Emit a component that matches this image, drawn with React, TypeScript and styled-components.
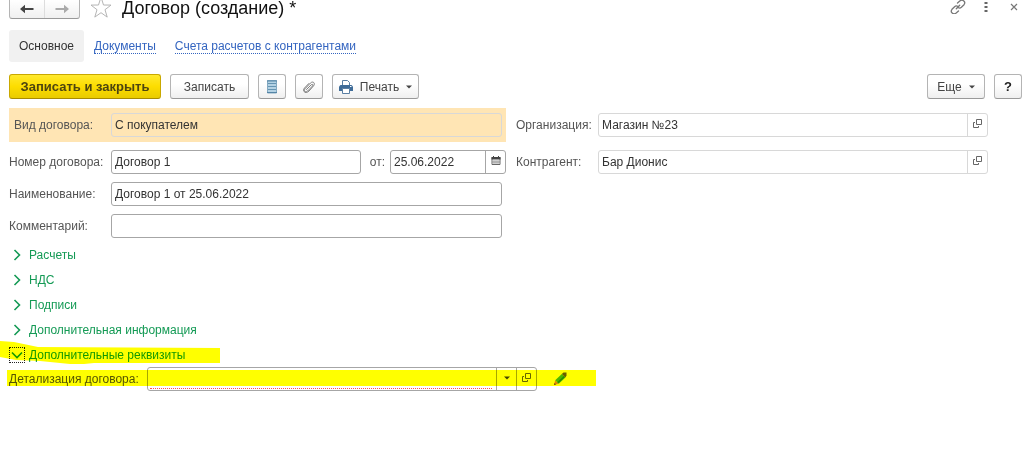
import React from "react";
import styled, { createGlobalStyle, css } from "styled-components";

const GlobalStyle = createGlobalStyle`
  * { box-sizing: border-box; }
  body {
    margin: 0;
    background: #fff;
    color: #333;
    font: 12px/16px "Liberation Sans", Arial, sans-serif;
    overflow-x: hidden;
  }
  button, input { font: inherit; color: inherit; margin: 0; }
`;

const Page = styled.main`
  padding: 0 2px 24px 9px;
`;

const TitleBar = styled.header`
  display: flex;
  align-items: flex-start;
  height: 30px;
`;

const History = styled.div`
  display: flex;
  width: 71px;
  height: 19px;
  border: 1px solid #b4b4b4;
  border-top: 0;
  border-bottom-color: #999;
  border-radius: 0 0 3px 3px;
  background: linear-gradient(#fff, #f0f0f0);
`;

const HistoryButton = styled.button`
  flex: 1;
  padding: 0;
  border: 0;
  background: none;
  line-height: 0;
  & + & { border-left: 1px solid #ddd; }
`;

const Star = styled.button`
  width: 24px;
  height: 19px;
  margin: 0 9px;
  padding: 0;
  border: 0;
  background: none;
  line-height: 0;
`;

const Title = styled.h1`
  margin: 0;
  flex: 1;
  font-size: 18px;
  line-height: 17px;
  font-weight: 400;
  color: #111;
`;

const WindowTools = styled.div`
  display: flex;
  gap: 12px;
`;

const WindowButton = styled.button`
  width: 16px;
  height: 14px;
  padding: 0;
  border: 0;
  background: none;
  line-height: 0;
`;

const Tabs = styled.nav`
  display: flex;
  align-items: center;
  gap: 19px;
  height: 32px;
  margin-bottom: 12px;
`;

const CurrentTab = styled.span`
  margin-right: -9px;
  padding: 8px 10px;
  border-radius: 3px;
  background: #f1f1f1;
`;

const TabLink = styled.a`
  padding-top: 1px;
  color: #3465c0;
  line-height: 13px;
  text-decoration: none;
  border-bottom: 1px dotted #3465c0;
`;

const Toolbar = styled.div`
  display: flex;
  gap: 9px;
  margin-bottom: 9px;
`;

const Spacer = styled.div`
  flex: 1;
`;

const Button = styled.button<{ $primary?: boolean; $width: number }>`
  display: flex;
  align-items: center;
  justify-content: center;
  gap: 7px;
  width: ${(p) => p.$width}px;
  height: 25px;
  padding: 0;
  border: 1px solid #b4b4b4;
  border-bottom-color: #999;
  border-radius: 3px;
  background: linear-gradient(#fff 40%, #efefef);
  color: #444;
  white-space: nowrap;
  ${(p) =>
    p.$primary &&
    css`
      border-color: #c9a800;
      border-bottom-color: #a88c00;
      background: linear-gradient(#ffe92e, #fddd00 50%, #e9cb00);
      color: #4d4510;
      font-size: 13px;
      font-weight: 700;
    `}
`;

const HelpMark = styled.b`
  font-size: 13px;
  color: #222;
`;

const Form = styled.form`
  display: grid;
  grid-template-columns: 497fr 472fr;
  column-gap: 10px;
  margin-right: 34px;
`;

const Column = styled.div`
  display: flex;
  flex-direction: column;
  gap: 8px;
  min-width: 0;
`;

const Row = styled.div<{ $inset?: boolean; $tall?: boolean; $band?: boolean }>`
  display: flex;
  align-items: center;
  height: ${(p) => (p.$tall ? 34 : 24)}px;
  padding-right: ${(p) => (p.$inset ? 4 : 0)}px;
  ${(p) =>
    p.$band &&
    css`
      padding: 0 4px 0 5px;
      background: #ffe5b4;
    `}
`;

const Label = styled.label<{ $width: number }>`
  flex: 0 0 ${(p) => p.$width}px;
  color: #555;
  white-space: nowrap;
`;

const Field = styled.div<{ $soft?: boolean; $clear?: boolean; $basis?: number }>`
  display: flex;
  flex: ${(p) => (p.$basis ? `0 1 ${p.$basis}px` : "1")};
  min-width: 0;
  height: 24px;
  border: 1px solid ${(p) => (p.$soft ? "#d8d8d8" : "#a6a6a6")};
  border-radius: 3px;
  background: ${(p) => (p.$clear ? "transparent" : "#fff")};
`;

const Input = styled.input<{ $required?: boolean }>`
  flex: 1;
  width: 0;
  min-width: 0;
  padding: 0 3px;
  border: 0;
  outline: 0;
  background: none;
  ${(p) =>
    p.$required &&
    css`
      height: 21px;
      margin: 0 4px 0 2px;
      border-bottom: 1px dotted #ff5050;
    `}
`;

const FieldButton = styled.button<{ $soft?: boolean }>`
  width: 20px;
  padding: 0 0 2px;
  border: 0;
  border-left: 1px solid ${(p) => (p.$soft ? "#d8d8d8" : "#a6a6a6")};
  background: none;
  line-height: 0;
`;

const Between = styled.label`
  margin: 0 5px 0 9px;
  color: #555;
`;

const Groups = styled.section`
  display: flex;
  flex-direction: column;
  align-items: flex-start;
  margin-top: 4px;
`;

const GroupButton = styled.button`
  display: flex;
  align-items: center;
  gap: 4px;
  height: 25px;
  padding: 0;
  border: 0;
  background: none;
  color: #149a55;
  white-space: nowrap;
`;

const Chevron = styled.span<{ $focused?: boolean }>`
  display: flex;
  align-items: center;
  justify-content: center;
  width: 16px;
  height: 16px;
  border: 1px dotted ${(p) => (p.$focused ? "#222" : "transparent")};
`;

const Marked = styled.div`
  position: relative;
`;

const Marker = styled.svg`
  position: absolute;
  left: -9px;
  top: -14px;
  mix-blend-mode: multiply;
  pointer-events: none;
`;

const DetailRow = styled.div`
  display: flex;
  align-items: center;
`;

const EditButton = styled.button`
  width: 16px;
  height: 16px;
  margin-left: 15px;
  padding: 0;
  border: 0;
  background: none;
  line-height: 0;
`;

const Arrow = ({ back }: { back?: boolean }) => (
  <svg width="14" height="10" viewBox="0 0 14 10" fill={back ? "#444" : "#aaa"}>
    {back ? <path d="M0 5l5-4.200V4h8.500v2H5v3.200z" /> : <path d="M14 5L9 .8V4H.5v2H9v3.200z" />}
  </svg>
);

const Caret = () => (
  <svg width="6" height="4" viewBox="0 0 6 4">
    <path d="M0 .5h6L3 3.500z" fill="#444" />
  </svg>
);

const OpenIcon = () => (
  <svg width="10" height="10" viewBox="0 0 10 10" fill="none" stroke="#666">
    <path d="M3.500 .5h5v5h-5zM2 3.500H.5v5h5V7" />
  </svg>
);

const CalendarIcon = () => (
  <svg width="10" height="10" viewBox="0 0 10 10">
    <path d="M1 1.500h8v7H1z" fill="#fff" stroke="#666" />
    <path d="M.5 1h9v2.500h-9zM2 0h1v2H2zM7 0h1v2H7z" fill="#444" />
    <path d="M3 4v4M5 4v4M7 4v4M1 6h8" stroke="#888" strokeWidth=".8" />
  </svg>
);

const ListIcon = () => (
  <svg width="10" height="14" viewBox="0 0 10 14">
    <path d="M.5 .5h9v12.500h-9z" fill="#b4d2e4" stroke="#83a9c1" />
    <path d="M1 3.500h8M1 6.500h8M1 9.500h8" stroke="#6695b3" />
    <path d="M0 1h10M0 12.500h10" stroke="#5585a6" />
  </svg>
);

const ClipIcon = () => (
  <svg width="14" height="14" viewBox="0 0 14 14" fill="none" stroke="#808080" strokeLinecap="round">
    <path d="M4.500 9.500l4.700-4.700c1.200-1.200 2.400 0 1.300 1.200L5.600 11c-2 2-4.400 0-2.500-2.300l5.300-5.600c2.500-2.500 5.300 0 3.200 2.700L7 11c-3.200 3.400-7.200.3-4.500-3L6.800 3.500" />
  </svg>
);

const PrintIcon = () => (
  <svg width="14" height="14" viewBox="0 0 14 14">
    <path d="M3.500 6V.5h5l2 2V6" fill="#fff" stroke="#5a7fa3" />
    <path d="M1.500 5h11L14 6.500V11H0V6.500z" fill="#3f6c98" />
    <path d="M3.500 8.500h7v5h-7z" fill="#fff" stroke="#5a7fa3" />
    <path d="M11 6.500h1.500" stroke="#fff" />
  </svg>
);

const LinkIcon = () => (
  <svg width="16" height="14" viewBox="0 0 16 14" fill="none" stroke="#777" strokeWidth="1.300" strokeLinecap="round">
    <path d="M7.500 3l2.300-2c2.900-2.200 6.400.9 4.200 3.700l-2.600 2.600c-1 .9-2.200 1-3.300.2M8.500 11l-2.300 2c-2.900 2.200-6.400-.9-4.200-3.700l2.600-2.600c1-.9 2.200-1 3.300-.2M6.300 8.700l3.400-3.400" />
  </svg>
);

const PencilIcon = () => (
  <svg width="16" height="16" viewBox="0 0 16 16">
    <path d="M2 14l1.200-4.800 3.600 3.600z" fill="#e58a38" />
    <path d="M3.200 9.200l6.600-6.300 3.600 3.600-6.600 6.300z" fill="#4bb848" />
    <path d="M5.800 11.800l6.600-6.300" stroke="#2c8a35" strokeWidth="1.500" />
    <path d="M9.800 2.900L11.500 1.500h3v3l-1.100 2z" fill="#6a6050" />
    <path d="M2 14l.6-2 1.400 1.400z" fill="#554030" />
  </svg>
);

const ChevronIcon = ({ open }: { open?: boolean }) => (
  <svg width="12" height="12" viewBox="0 0 12 12" fill="none" stroke="#149a55" strokeWidth="1.600">
    {open ? <path d="M1 3.500l5 5 5-5" /> : <path d="M3.500 1l5 5-5 5" />}
  </svg>
);

const groups = ["Расчеты", "НДС", "Подписи", "Дополнительная информация"];

export default function App() {
  return (
    <Page>
      <GlobalStyle />
      <TitleBar>
        <History>
          <HistoryButton aria-label="Назад"><Arrow back /></HistoryButton>
          <HistoryButton aria-label="Вперед"><Arrow /></HistoryButton>
        </History>
        <Star aria-label="В избранное">
          <svg width="24" height="19" viewBox="0 0 24 19" fill="#fff" stroke="#b5b5b5">
            <path d="M12-3l2.500 8 7.500.1-6 4.600 2.200 7.400L12 12.700l-6.200 4.400L8 9.700 2 5.100 9.500 5z" />
          </svg>
        </Star>
        <Title>Договор (создание) *</Title>
        <WindowTools>
          <WindowButton aria-label="Ссылка"><LinkIcon /></WindowButton>
          <WindowButton aria-label="Меню">
            <svg width="4" height="12" viewBox="0 0 4 12" fill="#666">
              <path d="M.5 1h3v2h-3zM.5 5h3v2h-3zM.5 9h3v2h-3z" />
            </svg>
          </WindowButton>
          <WindowButton aria-label="Закрыть">
            <svg width="8" height="8" viewBox="0 0 8 8" stroke="#777" strokeWidth="1.200">
              <path d="M1 1l6 6M7 1L1 7" />
            </svg>
          </WindowButton>
        </WindowTools>
      </TitleBar>

      <Tabs>
        <CurrentTab>Основное</CurrentTab>
        <TabLink href="#documents">Документы</TabLink>
        <TabLink href="#accounts">Счета расчетов с контрагентами</TabLink>
      </Tabs>

      <Toolbar>
        <Button $primary $width={152}>Записать и закрыть</Button>
        <Button $width={79}>Записать</Button>
        <Button $width={28} aria-label="Список"><ListIcon /></Button>
        <Button $width={28} aria-label="Файлы"><ClipIcon /></Button>
        <Button $width={87}><PrintIcon />Печать<Caret /></Button>
        <Spacer />
        <Button $width={58}>Еще<Caret /></Button>
        <Button $width={28} aria-label="Справка"><HelpMark>?</HelpMark></Button>
      </Toolbar>

      <Form>
        <Column>
          <Row $tall $band>
            <Label $width={97} htmlFor="kind">Вид договора:</Label>
            <Field $soft $clear><Input id="kind" readOnly defaultValue="С покупателем" /></Field>
          </Row>
          <Row>
            <Label $width={102} htmlFor="number">Номер договора:</Label>
            <Field><Input id="number" defaultValue="Договор 1" /></Field>
            <Between htmlFor="date">от:</Between>
            <Field $basis={116}>
              <Input id="date" defaultValue="25.06.2022" />
              <FieldButton type="button" aria-label="Календарь"><CalendarIcon /></FieldButton>
            </Field>
          </Row>
          <Row $inset>
            <Label $width={102} htmlFor="name">Наименование:</Label>
            <Field><Input id="name" defaultValue="Договор 1 от 25.06.2022" /></Field>
          </Row>
          <Row $inset>
            <Label $width={102} htmlFor="comment">Комментарий:</Label>
            <Field><Input id="comment" /></Field>
          </Row>
        </Column>
        <Column>
          <Row $tall>
            <Label $width={82} htmlFor="org">Организация:</Label>
            <Field $soft>
              <Input id="org" defaultValue="Магазин №23" />
              <FieldButton $soft type="button" aria-label="Открыть"><OpenIcon /></FieldButton>
            </Field>
          </Row>
          <Row>
            <Label $width={82} htmlFor="partner">Контрагент:</Label>
            <Field $soft>
              <Input id="partner" defaultValue="Бар Дионис" />
              <FieldButton $soft type="button" aria-label="Открыть"><OpenIcon /></FieldButton>
            </Field>
          </Row>
        </Column>
      </Form>

      <Groups>
        {groups.map((name) => (
          <GroupButton key={name} aria-expanded={false}>
            <Chevron><ChevronIcon /></Chevron>
            {name}
          </GroupButton>
        ))}
      </Groups>
      <Marked>
        <GroupButton aria-expanded>
          <Chevron $focused><ChevronIcon open /></Chevron>
          Дополнительные реквизиты
        </GroupButton>
        <DetailRow>
          <Label $width={138} htmlFor="detail">Детализация договора:</Label>
          <Field $basis={390}>
            <Input id="detail" $required />
            <FieldButton type="button" aria-label="Выбрать"><Caret /></FieldButton>
            <FieldButton type="button" aria-label="Открыть"><OpenIcon /></FieldButton>
          </Field>
          <EditButton aria-label="Изменить"><PencilIcon /></EditButton>
        </DetailRow>
        <Marker width="600" height="64" viewBox="0 0 600 64" fill="#ff0">
          <path d="M0 13l14 1 24 5 182 1v15H94l-10 1H70l-30-3-24-1-16-3zM7 42h589v16H7z" />
        </Marker>
      </Marked>
    </Page>
  );
}
